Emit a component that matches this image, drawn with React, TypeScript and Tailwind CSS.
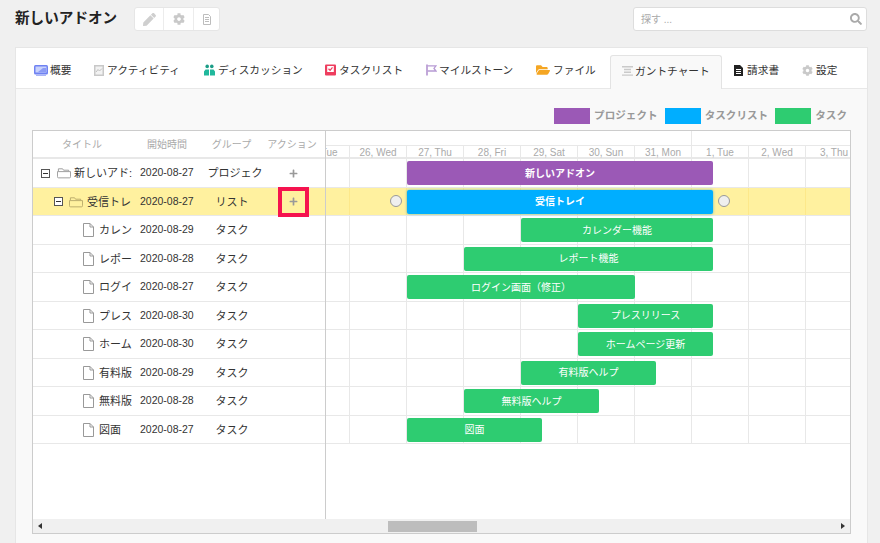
import { FaPen, FaCog, FaSearch, FaPlus, FaFolderOpen } from "react-icons/fa";
import { ReactNode } from "react";

const font = { fontFamily: '"Liberation Sans", "Noto Sans CJK JP", sans-serif' };

const Monitor = () => (
  <svg width="14" height="11" viewBox="0 0 14 11" fill="none"><rect x="0" y="0" width="14" height="9.5" rx="1.5" fill="#6f82f2" /><rect x="1.5" y="1.5" width="11" height="6" fill="#c9d2fb" /><path d="M4 7l5-4h3v4z" fill="#8b9bf5" /><path d="M2 9.5h10V11H2z" fill="#aab5f7" /></svg>
);
const Activity = () => (
  <svg width="10" height="11" viewBox="0 0 10 11" fill="none"><rect x="0.75" y="0.75" width="8.5" height="9.5" fill="#f2f2f2" stroke="#c8c8c8" strokeWidth="1.5" /><path d="M2 7l2-2.5 1.5 1.5L8 3.5" stroke="#c0c0c0" /></svg>
);
const Team = () => (
  <svg width="11" height="12" viewBox="0 0 11 12"><circle cx="3.2" cy="2.4" r="1.8" fill="#1b9c86" /><circle cx="7.8" cy="2.4" r="1.8" fill="#1b9c86" /><path d="M0 11.5V7.5l1.5-2h3.5v6zM6 11.5v-6h3.5l1.5 2v4z" fill="#20b89c" /></svg>
);
const Task = () => (
  <svg width="11" height="12" viewBox="0 0 11 12" fill="none"><rect x="0" y="0.5" width="11" height="11" rx="1" fill="#ee3d5e" /><rect x="2.2" y="2" width="6.6" height="6" fill="#fff" /><path d="M3.5 4.8l1.6 1.5 2.4-3" stroke="#ee3d5e" strokeWidth="1.2" /></svg>
);
const Flag = () => (
  <svg width="11" height="12" viewBox="0 0 11 12" fill="none"><path d="M1 0.5v11" stroke="#a884c9" strokeWidth="1.4" /><path d="M1.5 1.8h8.5l-2 2.6 2 2.6H1.5" stroke="#b79ad4" strokeWidth="1.3" /></svg>
);
const GanttIcon = () => (
  <svg width="11" height="10" viewBox="0 0 11 10" fill="#cacaca"><path d="M0 0h11v1.4H0zM2 2.8h7v1.4H2zM2 5.6h7V7H2zM0 8.4h11v1.4H0z" /></svg>
);
const Invoice = () => (
  <svg width="9" height="11" viewBox="0 0 9 11"><path d="M0 0h6l3 3v8H0z" fill="#222" /><path d="M2 4h5v1H2zM2 6h5v1H2zM2 8h5v1H2z" fill="#fff" /></svg>
);
const DocSmall = () => (
  <svg width="8" height="11" viewBox="0 0 8 11" fill="none" stroke="#bdbdbd"><path d="M0.5 0.5h5l2 2v8h-7z" /><path d="M2 3.5h4M2 5.5h4M2 7.5h4" /></svg>
);
const FileOutline = () => (
  <svg className="shrink-0" width="11" height="14" viewBox="0 0 11 14" fill="none" stroke="#999" strokeWidth="1"><path d="M0.5 0.5h6.5l3.5 3.5v9.5H0.5z" /><path d="M7 0.5V4h3.5" /></svg>
);
const FolderOutline = ({ c }: { c: string }) => (
  <svg className="shrink-0" width="14" height="12" viewBox="0 0 15 12" fill="none" stroke={c} strokeWidth="1"><path d="M1.5 4V1.5h4.5l1 1.5h5.5V4" /><path d="M0.5 4.5h14v5.5a1.2 1.2 0 0 1-1.2 1.2H1.7A1.2 1.2 0 0 1 .5 10z" /></svg>
);
const Minus = () => (
  <span className="w-[9px] h-[9px] border border-[#555] flex items-center justify-center bg-white shrink-0"><span className="w-[5px] h-px bg-[#333]" /></span>
);

const tabs: { icon: ReactNode; label: string; active?: boolean; w: string; gap: string }[] = [
  { icon: <Monitor />, label: "概要", w: "w-[60px]", gap: "gap-[2px]" },
  { icon: <Activity />, label: "アクティビティ", w: "w-[110px]", gap: "gap-[3px]" },
  { icon: <Team />, label: "ディスカッション", w: "w-[121px]", gap: "gap-[3px]" },
  { icon: <Task />, label: "タスクリスト", w: "w-[101px]", gap: "gap-[3px]" },
  { icon: <Flag />, label: "マイルストーン", w: "w-[110px]", gap: "gap-[2px]" },
  { icon: <FaFolderOpen size={14} color="#f5a623" />, label: "ファイル", w: "w-[86px]", gap: "gap-[3px]" },
  { icon: <GanttIcon />, label: "ガントチャート", w: "w-[112px]", gap: "gap-[2px]", active: true },
  { icon: <Invoice />, label: "請求書", w: "w-[68px]", gap: "gap-[4px]" },
  { icon: <FaCog size={11} color="#c9c9c9" />, label: "設定", w: "w-[50px]", gap: "gap-[3px]" },
];

const days = ["25, Tue", "26, Wed", "27, Thu", "28, Fri", "29, Sat", "30, Sun", "31, Mon", "1, Tue", "2, Wed", "3, Thu"];

type Row = { level: 0 | 1 | 2; name: string; date: string; group: string; bar: string; start: number; span: number; color: string };
const rows: Row[] = [
  { level: 0, name: "新しいアド:", date: "2020-08-27", group: "プロジェク", bar: "新しいアドオン", start: 2, span: 5.37, color: "#9b59b6" },
  { level: 1, name: "受信トレ", date: "2020-08-27", group: "リスト", bar: "受信トレイ", start: 2, span: 5.37, color: "#00aeff" },
  { level: 2, name: "カレン", date: "2020-08-29", group: "タスク", bar: "カレンダー機能", start: 4, span: 3.37, color: "#2ecc71" },
  { level: 2, name: "レポー", date: "2020-08-28", group: "タスク", bar: "レポート機能", start: 3, span: 4.37, color: "#2ecc71" },
  { level: 2, name: "ログイ", date: "2020-08-27", group: "タスク", bar: "ログイン画面（修正）", start: 2, span: 4, color: "#2ecc71" },
  { level: 2, name: "プレス", date: "2020-08-30", group: "タスク", bar: "プレスリリース", start: 5, span: 2.37, color: "#2ecc71" },
  { level: 2, name: "ホーム", date: "2020-08-30", group: "タスク", bar: "ホームページ更新", start: 5, span: 2.37, color: "#2ecc71" },
  { level: 2, name: "有料版", date: "2020-08-29", group: "タスク", bar: "有料版ヘルプ", start: 4, span: 2.37, color: "#2ecc71" },
  { level: 2, name: "無料版", date: "2020-08-28", group: "タスク", bar: "無料版ヘルプ", start: 3, span: 2.37, color: "#2ecc71" },
  { level: 2, name: "図面", date: "2020-08-27", group: "タスク", bar: "図面", start: 2, span: 2.37, color: "#2ecc71" },
];

const Legend = ({ color, label }: { color: string; label: string }) => (
  <div className="flex items-center gap-[4px]">
    <span className="w-[36px] h-[16px]" style={{ backgroundColor: color }} />
    <span className="text-[10.6px] font-bold text-[#999] whitespace-nowrap">{label}</span>
  </div>
);

export default function App() {
  return (
    <div className="w-[880px] h-[543px] bg-[#f0f0f0] overflow-hidden text-[#333]" style={font}>
      <div className="h-[47px] pl-[15px] pr-[13px] flex items-start justify-between">
        <div className="flex items-start">
          <h1 className="text-[14.6px] font-bold text-[#222] w-[119px] mt-[8px] whitespace-nowrap">新しいアドオン</h1>
          <div className="flex h-[24px] mt-[7px] border border-[#e6e6e6] rounded-[3px] bg-white">
            <span className="w-[29px] flex items-center justify-center border-r border-[#ececec]"><FaPen size={13} color="#cfcfcf" /></span>
            <span className="w-[30px] flex items-center justify-center border-r border-[#ececec]"><FaCog size={12} color="#c9c9c9" /></span>
            <span className="w-[25px] flex items-center justify-center"><DocSmall /></span>
          </div>
        </div>
        <div className="mt-[7px] w-[234px] h-[24px] bg-white border border-[#ddd] rounded-[3px] flex items-center justify-between pl-[7px] pr-[4px]">
          <span className="text-[10px] text-[#aaa]">探す ...</span>
          <FaSearch size={12} color="#aaa" />
        </div>
      </div>

      <div className="ml-[15px] w-[853px] h-[496px] bg-[#f9f9f9] border border-[#e6e6e6] border-b-0">
        <div className="h-[41px] bg-white border-b border-[#e8e8e8] flex items-end pl-[6px]">
          {tabs.map((t) => (
            <div
              key={t.label}
              className={`${t.w} ${t.gap} flex items-center pb-[3px] text-[10.7px] whitespace-nowrap ${t.active ? "h-[34px] pl-[11px] bg-[#f9f9f9] border border-[#e3e3e3] border-b-0 rounded-t-[3px] -mb-px" : "h-[33px] pl-[12px]"}`}
            >
              {t.icon}
              <span>{t.label}</span>
            </div>
          ))}
        </div>

        <div className="pl-[16px]">
          <div className="h-[41px] w-[819px] flex items-start justify-end gap-[7px] pt-[19px] pr-[4px]">
            <Legend color="#9b59b6" label="プロジェクト" />
            <Legend color="#00aeff" label="タスクリスト" />
            <Legend color="#2ecc71" label="タスク" />
          </div>

          <div className="h-[404px] w-[819px] border border-[#ccc] bg-white flex flex-col">
            <div className="flex flex-1 min-h-0">
              <div className="w-[293px] shrink-0 border-r border-[#ccc]">
                <div className="h-[26px] flex items-center text-[10px] text-[#aaa] border-b-2 border-[#e8e8e8] box-content whitespace-nowrap">
                  <span className="w-[97px] pl-[29px]">タイトル</span>
                  <span className="w-[74px] text-center">開始時間</span>
                  <span className="w-[55px] text-center">グループ</span>
                  <span className="w-[66px] text-center">アクション</span>
                </div>
                {rows.map((r, i) => (
                  <div
                    key={i}
                    className={`h-[28.5px] pt-[1px] flex items-center text-[11px] border-b border-[#e8e8e8] ${r.level === 1 ? "bg-[#fff19f]" : ""}`}
                  >
                    <div className={`w-[100px] mr-[7px] flex items-center overflow-hidden whitespace-nowrap ${r.level === 0 ? "pl-[8px] gap-[7px]" : r.level === 1 ? "pl-[21px] gap-[6px]" : "pl-[50px] gap-[5px]"}`}>
                      {r.level < 2 ? <Minus /> : null}
                      {r.level < 2 ? <FolderOutline c={r.level === 0 ? "#999" : "#b8a96a"} /> : <FileOutline />}
                      <span className={r.level === 0 ? "-ml-[4px]" : r.level === 1 ? "-ml-[2px]" : ""}>{r.name}</span>
                    </div>
                    <span className="w-[54px] text-[10.5px]">{r.date}</span>
                    <span className={`w-[76px] text-center whitespace-nowrap overflow-hidden ${r.level === 0 ? "pl-[6px]" : ""}`}>{r.group}</span>
                    <span className="flex-1 flex justify-center pr-[9px]">
                      {r.level < 2 ? (
                        <span className={`w-[31px] h-[30px] flex items-center justify-center ${r.level === 1 ? "border-[4px] border-[#f5134f]" : ""}`}>
                          <FaPlus size={9} color="#999" />
                        </span>
                      ) : null}
                    </span>
                  </div>
                ))}
              </div>

              <div className="flex-1 min-w-0 overflow-hidden">
                <div className="h-[15px] border-b border-[#e8e8e8] flex">
                  <div className="w-[366px] border-r border-[#e8e8e8]" />
                </div>
                <div className="h-[11px] flex -ml-[33px] border-b-2 border-[#e8e8e8] box-content">
                  {days.map((d) => (
                    <div key={d} className="w-[57px] shrink-0 border-r border-[#e8e8e8] text-[10px] text-[#aaa] text-center leading-[13px] whitespace-nowrap">{d}</div>
                  ))}
                </div>
                {rows.map((r, i) => (
                  <div key={i} className={`relative h-[28.5px] flex -ml-[33px] border-b border-[#e8e8e8] ${r.level === 1 ? "bg-[#fff19f]" : ""}`}>
                    {days.map((d) => (
                      <div key={d} className={`w-[57px] shrink-0 border-r ${r.level === 1 ? "border-[#fde88a]" : "border-[#e8e8e8]"}`} />
                    ))}
                    <div
                      className={`absolute top-[2px] h-[24px] rounded-[2px] flex items-center justify-center text-white text-[10px] whitespace-nowrap ${r.level < 2 ? "font-bold" : ""} ${r.level === 1 ? "shadow-[0_0_3px_rgba(0,150,220,0.6)]" : ""}`}
                      style={{ left: r.start * 57, width: r.span * 57, backgroundColor: r.color }}
                    >
                      {r.bar}
                    </div>
                    {r.level === 1 ? (
                      <>
                        <span className="absolute top-[7px] left-[97px] w-[12px] h-[12px] rounded-full bg-[#efefef] border border-[#999]" />
                        <span className="absolute top-[7px] left-[425px] w-[12px] h-[12px] rounded-full bg-[#efefef] border border-[#999]" />
                      </>
                    ) : null}
                  </div>
                ))}
              </div>
            </div>
            <div className="h-[14px] bg-[#f0f0f0] flex items-center justify-between px-[5px] relative shrink-0">
              <span className="w-0 h-0 border-y-[3px] border-y-transparent border-r-[4px] border-r-[#333]" />
              <span className="absolute left-[355px] top-[2px] w-[89px] h-[11px] bg-[#bdbdbd]" />
              <span className="w-0 h-0 border-y-[3px] border-y-transparent border-l-[4px] border-l-[#333]" />
            </div>
          </div>
        </div>
      </div>
    </div>
  );
}
